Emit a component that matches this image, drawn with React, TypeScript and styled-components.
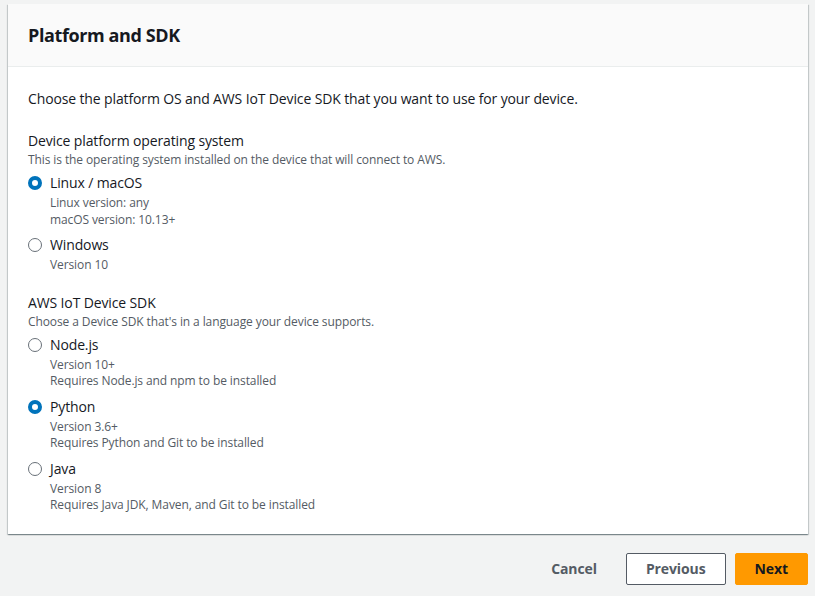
import React from "react";
import styled, { createGlobalStyle } from "styled-components";

const Global = createGlobalStyle`
  html, body { margin: 0; padding: 0; background: #f2f3f3; }
  body { font-family: "Open Sans", "Noto Sans", Arial, sans-serif; color: #16191f; -webkit-font-smoothing: antialiased; }
  * { box-sizing: border-box; }
`;

const Page = styled.div`
  width: 815px;
  height: 596px;
  padding: 4px 7px 0 8px;
  display: flex;
  flex-direction: column;
`;

const Card = styled.section`
  background: #fff;
  box-shadow: 0 1px 1px 0 rgba(0, 28, 36, 0.3), 1px 1px 1px 0 rgba(0, 28, 36, 0.15),
    -1px 1px 1px 0 rgba(0, 28, 36, 0.15);
`;

const Header = styled.header`
  height: 63px;
  background: #fafafa;
  border-bottom: 1px solid #eaeded;
  display: flex;
  align-items: center;
  padding: 0 20px;
`;

const Title = styled.h2`
  margin: 0;
  font-size: 18px;
  font-weight: 700;
  line-height: 22px;
  letter-spacing: -0.4px;
`;

const Body = styled.div`
  padding: 21px 20px 20px;
`;

const Intro = styled.p`
  margin: 0 0 21px;
  font-size: 14px;
  line-height: 22px;
  letter-spacing: -0.13px;
`;

const Group = styled.div`
  margin-bottom: 19px;
  &:last-child { margin-bottom: 0; }
`;

const GroupLabel = styled.div`
  font-size: 14px;
  line-height: 20px;
  letter-spacing: -0.13px;
`;

const GroupHint = styled.div`
  font-size: 12px;
  line-height: 17px;
  color: #545b64;
  margin-bottom: 5px;
  letter-spacing: -0.1px;
`;

const Option = styled.div`
  display: grid;
  grid-template-columns: 14px 1fr;
  column-gap: 8px;
  margin-bottom: 7px;
  &:last-child { margin-bottom: 0; }
`;

const Radio = styled.span<{ $checked?: boolean }>`
  width: 14px;
  height: 14px;
  margin-top: 3px;
  border-radius: 50%;
  border: ${(p) => (p.$checked ? "4px solid #0073bb" : "1px solid #687078")};
  background: #fff;
`;

const OptionLabel = styled.div`
  font-size: 14px;
  line-height: 20px;
  margin-bottom: 2px;
  letter-spacing: -0.13px;
`;

const OptionDesc = styled.div`
  font-size: 12px;
  line-height: 16.5px;
  color: #545b64;
  letter-spacing: -0.1px;
`;

const Actions = styled.div`
  display: flex;
  justify-content: flex-end;
  align-items: center;
  gap: 9px;
  margin-top: 19px;
`;

const Button = styled.button<{ $variant: "link" | "normal" | "primary" }>`
  font-family: inherit;
  font-size: 14px;
  font-weight: 700;
  height: 32px;
  border-radius: 2px;
  padding: 0 19px;
  cursor: pointer;
  letter-spacing: -0.1px;
  color: ${(p) => (p.$variant === "primary" ? "#16191f" : "#545b64")};
  background: ${(p) => (p.$variant === "primary" ? "#ff9900" : p.$variant === "normal" ? "#fff" : "transparent")};
  border: 1px solid ${(p) => (p.$variant === "primary" ? "#ff9900" : p.$variant === "normal" ? "#545b64" : "transparent")};
`;

type Opt = { label: string; desc: string[]; checked?: boolean };

const osOpts: Opt[] = [
  { label: "Linux / macOS", desc: ["Linux version: any", "macOS version: 10.13+"], checked: true },
  { label: "Windows", desc: ["Version 10"] },
];

const sdkOpts: Opt[] = [
  { label: "Node.js", desc: ["Version 10+", "Requires Node.js and npm to be installed"] },
  { label: "Python", desc: ["Version 3.6+", "Requires Python and Git to be installed"], checked: true },
  { label: "Java", desc: ["Version 8", "Requires Java JDK, Maven, and Git to be installed"] },
];

const Options = ({ opts }: { opts: Opt[] }) => (
  <>
    {opts.map((o) => (
      <Option key={o.label}>
        <Radio $checked={o.checked} />
        <div>
          <OptionLabel>{o.label}</OptionLabel>
          {o.desc.map((d) => (
            <OptionDesc key={d}>{d}</OptionDesc>
          ))}
        </div>
      </Option>
    ))}
  </>
);

export default function App() {
  return (
    <Page>
      <Global />
      <Card>
        <Header>
          <Title>Platform and SDK</Title>
        </Header>
        <Body>
          <Intro>Choose the platform OS and AWS IoT Device SDK that you want to use for your device.</Intro>
          <Group>
            <GroupLabel>Device platform operating system</GroupLabel>
            <GroupHint>This is the operating system installed on the device that will connect to AWS.</GroupHint>
            <Options opts={osOpts} />
          </Group>
          <Group>
            <GroupLabel>AWS IoT Device SDK</GroupLabel>
            <GroupHint>Choose a Device SDK that's in a language your device supports.</GroupHint>
            <Options opts={sdkOpts} />
          </Group>
        </Body>
      </Card>
      <Actions>
        <Button $variant="link">Cancel</Button>
        <Button $variant="normal">Previous</Button>
        <Button $variant="primary">Next</Button>
      </Actions>
    </Page>
  );
}
